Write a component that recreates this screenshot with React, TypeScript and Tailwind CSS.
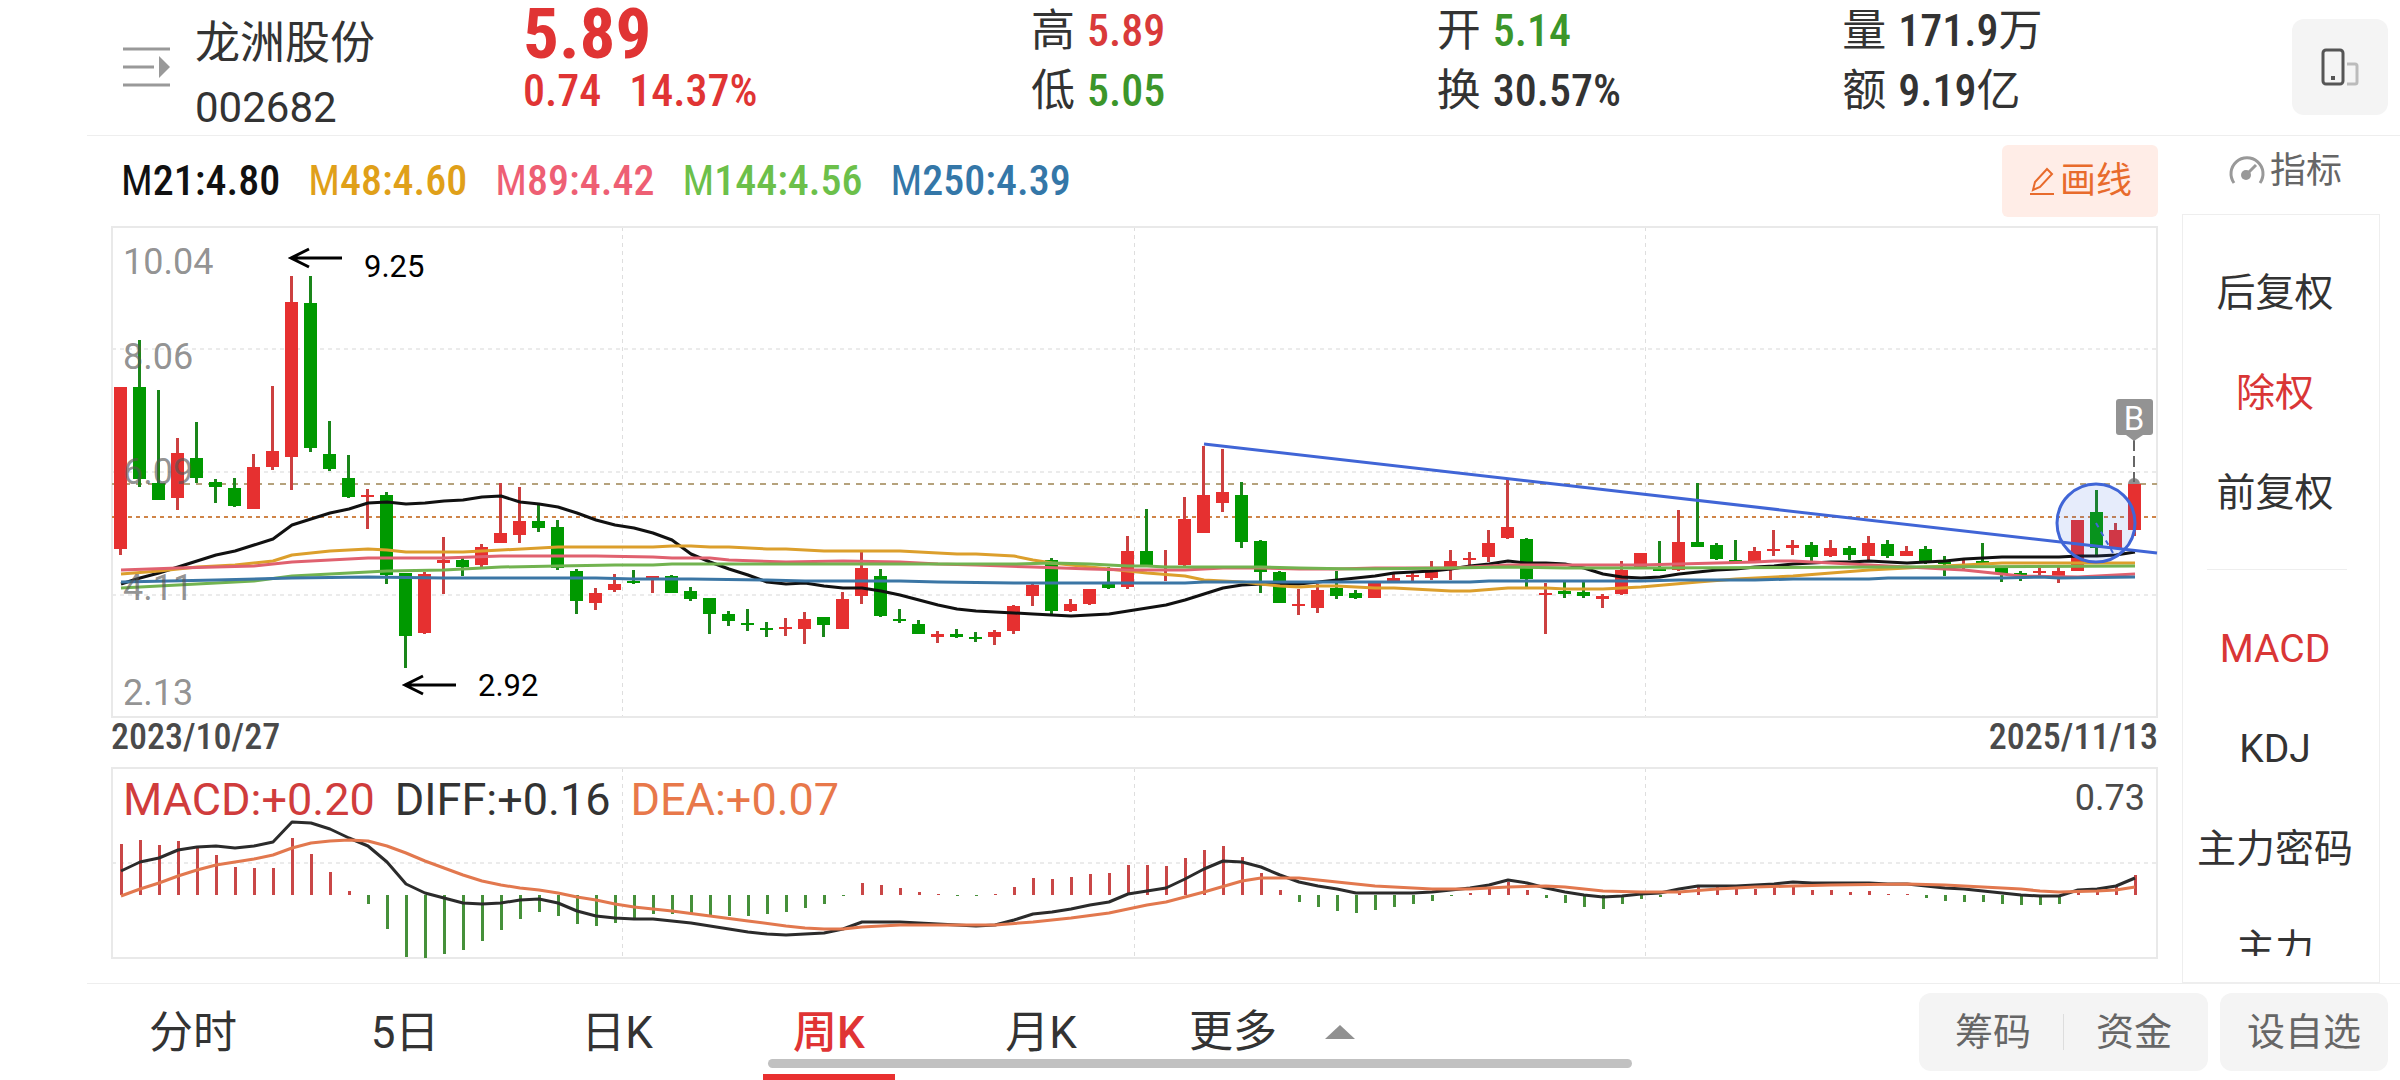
import React from "react";

/* ---------- chart data ---------- */

const FIRST_X = 120;
const STEP = 19;
const xAt = (i: number) => FIRST_X + i * STEP;

type Candle = [dir: "r" | "g", high: number, top: number, bottom: number, low: number];

const CANDLES: Candle[] = [
  ["r", 387, 387, 549, 555], ["g", 340, 387, 479, 487], ["g", 390, 483, 500, 500], ["r", 438, 453, 498, 510],
  ["g", 422, 458, 478, 483], ["g", 479, 482, 487, 503], ["g", 478, 488, 506, 507], ["r", 454, 467, 509, 509],
  ["r", 386, 451, 467, 470], ["r", 276, 302, 457, 490], ["g", 276, 303, 448, 452], ["g", 421, 454, 469, 471],
  ["g", 455, 478, 497, 498], ["r", 489, 495, 497, 529], ["g", 492, 495, 575, 584], ["g", 573, 573, 636, 668],
  ["r", 572, 574, 633, 634], ["r", 537, 560, 563, 594], ["g", 558, 560, 567, 576], ["r", 544, 547, 565, 568],
  ["r", 483, 533, 543, 543], ["r", 487, 521, 535, 543], ["g", 504, 521, 528, 532], ["g", 520, 527, 568, 570],
  ["g", 569, 571, 601, 614], ["r", 588, 593, 603, 610], ["r", 574, 584, 590, 592], ["g", 570, 581, 583, 584],
  ["r", 576, 576, 578, 593], ["g", 575, 576, 593, 593], ["g", 587, 591, 599, 601], ["g", 598, 598, 614, 634],
  ["g", 611, 614, 621, 626], ["g", 609, 623, 625, 631], ["g", 622, 628, 630, 637], ["r", 618, 627, 629, 636],
  ["r", 612, 619, 629, 644], ["g", 617, 617, 625, 637], ["r", 592, 599, 629, 629], ["r", 552, 568, 596, 604],
  ["g", 569, 576, 616, 617], ["g", 609, 619, 621, 623], ["g", 620, 624, 634, 634], ["r", 631, 634, 637, 643],
  ["g", 629, 634, 637, 638], ["g", 632, 637, 639, 642], ["r", 630, 632, 637, 645], ["r", 605, 606, 631, 634],
  ["r", 584, 585, 596, 606], ["g", 558, 560, 611, 614], ["r", 599, 604, 611, 612], ["r", 589, 589, 604, 605],
  ["g", 567, 583, 588, 589], ["r", 536, 551, 587, 589], ["g", 509, 551, 566, 566], ["r", 550, 566, 568, 581],
  ["r", 497, 519, 565, 567], ["r", 446, 495, 533, 533], ["r", 449, 492, 503, 512], ["g", 482, 495, 542, 548],
  ["g", 540, 541, 572, 593], ["g", 571, 572, 603, 603], ["r", 589, 604, 606, 615], ["r", 584, 590, 608, 613],
  ["g", 571, 588, 596, 599], ["g", 590, 593, 598, 599], ["r", 583, 583, 598, 598], ["r", 572, 578, 581, 581],
  ["r", 572, 575, 577, 581], ["r", 561, 572, 578, 580], ["r", 550, 561, 568, 580], ["r", 552, 558, 560, 565],
  ["r", 530, 543, 557, 562], ["r", 479, 527, 538, 539], ["g", 538, 539, 579, 587], ["r", 583, 593, 595, 634],
  ["g", 582, 591, 594, 598], ["g", 582, 592, 596, 598], ["r", 594, 596, 599, 608], ["r", 561, 570, 594, 595],
  ["r", 553, 553, 567, 567], ["g", 541, 569, 571, 571], ["r", 510, 542, 570, 571], ["g", 483, 542, 547, 547],
  ["g", 543, 545, 559, 560], ["g", 540, 560, 562, 562], ["r", 547, 551, 563, 563], ["r", 530, 549, 551, 556],
  ["r", 540, 545, 548, 555], ["g", 542, 545, 557, 562], ["r", 540, 548, 556, 557], ["g", 546, 548, 555, 560],
  ["r", 536, 543, 556, 560], ["g", 540, 544, 556, 558], ["r", 546, 551, 556, 556], ["g", 546, 549, 563, 564],
  ["g", 556, 562, 564, 576], ["r", 560, 564, 566, 569], ["g", 543, 561, 564, 564], ["g", 566, 567, 574, 582],
  ["g", 571, 573, 575, 581], ["r", 568, 571, 573, 576], ["r", 566, 571, 576, 583], ["r", 520, 520, 571, 571],
  ["g", 490, 512, 548, 555], ["r", 523, 530, 548, 548], ["r", 484, 484, 530, 536],
];

/* Moving averages as [candle index, y] pairs */
type Pair = [number, number];

const MA21: Pair[] = [
  584, 578, 573, 567, 561, 555, 551, 545, 539, 525, 519, 513, 509, 503, 502, 504, 503, 501, 500, 497, 496, 502, 504,
  507, 513, 520, 525, 528, 533, 540, 554, 562, 569, 575, 582, 584, 583, 586, 588, 588, 591, 595, 600, 605, 609, 611,
  612, 613, 614, 615, 616, 615, 614, 611, 608, 605, 600, 594, 588, 585, 584, 584, 584, 582, 580, 578, 576, 573, 572,
  571, 569, 566, 564, 561, 563, 563, 564, 568, 574, 577, 578, 577, 574, 572, 570, 569, 567, 566, 564, 563, 562, 562,
  561, 562, 563, 562, 561, 559, 558, 557, 557, 557, 557, 556, 556, 555, 552,
].map((y, i): Pair => [i, y]);

const MA48: Pair[] = [
  [0, 574], [2, 571], [4, 567], [6, 565], [8, 561], [9, 555], [11, 551], [13, 549], [14, 550], [15, 552], [18, 552],
  [20, 550], [23, 547], [28, 547], [29, 546], [30, 546], [31, 547], [32, 547], [34, 549], [35, 549], [37, 551],
  [41, 551], [44, 554], [45, 554], [47, 556], [48, 560], [49, 563], [51, 567], [53, 571], [54, 573], [56, 576],
  [57, 580], [59, 582], [61, 586], [62, 587], [63, 586], [64, 586], [66, 588], [67, 588], [70, 591], [71, 591],
  [73, 588], [75, 588], [76, 589], [78, 589], [80, 587], [83, 582], [85, 579], [88, 576], [90, 573], [92, 570],
  [94, 568], [97, 565], [99, 563], [106, 563],
];

const MA89: Pair[] = [
  [0, 570], [3, 568], [7, 566], [9, 562], [13, 558], [17, 558], [20, 556], [25, 556], [28, 557], [29, 558], [31, 558],
  [32, 560], [35, 562], [38, 561], [41, 562], [43, 564], [45, 565], [48, 567], [51, 569], [53, 570], [56, 570],
  [58, 568], [60, 568], [62, 569], [64, 569], [66, 568], [70, 568], [72, 566], [73, 565], [80, 565], [84, 563],
  [86, 562], [87, 561], [88, 561], [89, 562], [92, 565], [94, 567], [96, 569], [97, 570], [98, 572], [99, 574],
  [100, 576], [103, 577], [104, 576], [106, 574],
];

const MA144: Pair[] = [
  [0, 588], [3, 585], [7, 581], [9, 576], [14, 571], [17, 570], [20, 567], [23, 566], [26, 565], [28, 565], [29, 564],
  [47, 564], [49, 563], [51, 564], [53, 566], [54, 566], [55, 567], [60, 567], [62, 568], [65, 569], [70, 568],
  [73, 567], [76, 568], [80, 568], [93, 567], [106, 566],
];

const MA250: Pair[] = [
  [0, 582], [5, 580], [9, 578], [13, 577], [17, 578], [25, 578], [27, 579], [30, 579], [34, 580], [36, 581], [41, 581],
  [43, 582], [47, 583], [56, 583], [57, 582], [71, 582], [72, 581], [80, 581], [82, 580], [86, 580], [88, 579],
  [92, 579], [93, 578], [99, 578], [101, 577], [102, 578], [106, 577],
];

const MACD_ZERO = 895;
const MACD_BARS = [
  844, 840, 845, 841, 847, 855, 867, 868, 868, 838, 854, 872, 891, 904, 929, 957, 958, 954, 950, 941, 930, 919, 912,
  916, 924, 926, 923, 918, 914, 914, 914, 915, 916, 916, 914, 912, 908, 904, 896, 883, 885, 888, 892, 894, 896, 896,
  894, 887, 878, 879, 877, 874, 873, 865, 865, 866, 858, 850, 846, 857, 873, 890, 902, 907, 911, 913, 910, 907, 904,
  901, 896, 893, 889, 882, 890, 898, 903, 907, 909, 904, 899, 897, 893, 887, 887, 889, 889, 887, 887, 890, 890, 892,
  891, 894, 894, 898, 901, 902, 902, 904, 905, 905, 904, 892, 891, 887, 875,
];

const DIFF: Pair[] = [
  871, 862, 858, 850, 847, 846, 848, 846, 842, 822, 823, 829, 838, 846, 862, 884, 893, 898, 903, 904, 903, 900, 899,
  903, 911, 916, 918, 919, 919, 921, 923, 926, 929, 932, 934, 935, 934, 933, 929, 922, 922, 922, 923, 924, 925, 926,
  925, 920, 914, 912, 909, 905, 902, 894, 891, 888, 879, 869, 861, 862, 867, 875, 882, 886, 889, 893, 893, 893, 893,
  892, 890, 888, 885, 880, 883, 888, 892, 895, 897, 896, 894, 893, 889, 886, 886, 886, 885, 884, 882, 883, 883, 883,
  883, 884, 884, 886, 888, 889, 891, 893, 895, 896, 896, 890, 889, 886, 878,
].map((y, i): Pair => [i, y]);

const DEA: Pair[] = [
  [0, 896], [1, 889], [2, 883], [3, 876], [4, 870], [5, 865], [6, 862], [7, 859], [8, 855], [9, 848], [10, 843],
  [11, 841], [12, 840], [13, 841], [14, 846], [15, 853], [16, 861], [17, 868], [18, 875], [19, 881], [20, 885],
  [21, 888], [22, 890], [23, 893], [24, 897], [25, 900], [26, 904], [27, 907], [29, 911], [31, 916], [33, 921],
  [35, 926], [36, 928], [37, 929], [38, 929], [39, 927], [41, 925], [46, 925], [48, 922], [50, 918], [52, 913],
  [54, 905], [55, 902], [57, 892], [59, 881], [60, 878], [62, 878], [64, 882], [66, 886], [69, 889], [71, 889],
  [73, 887], [75, 886], [76, 887], [78, 891], [80, 892], [82, 892], [84, 889], [86, 887], [88, 886], [90, 885],
  [94, 884], [96, 885], [98, 887], [100, 889], [101, 891], [102, 892], [104, 891], [105, 890], [106, 887],
];

const GRID_X = [622, 1134, 1645];
const RED = "#e63030";
const GREEN = "#009900";

function Line({ pairs, color }: { pairs: Pair[]; color: string }) {
  return (
    <polyline
      points={pairs.map(([i, y]) => `${xAt(i) + 1},${y}`).join(" ")}
      fill="none"
      stroke={color}
      strokeWidth={3}
      strokeLinejoin="round"
    />
  );
}

function Arrow({ x, y, labelY, label }: { x: number; y: number; labelY: number; label: string }) {
  return (
    <g>
      <path d={`M${x + 52} ${y}H${x + 1}M${x + 19} ${y - 9}L${x + 1} ${y}L${x + 19} ${y + 9}`} fill="none" stroke="#000" strokeWidth={3} />
      <text x={x + 74} y={labelY} fontSize={31} fill="#000">{label}</text>
    </g>
  );
}

function PriceChart() {
  const labels: [string, number][] = [["10.04", 274], ["8.06", 369], ["6.09", 484], ["4.11", 600], ["2.13", 705]];
  return (
    <svg viewBox="111 226 2047 492" className="block h-auto w-full" role="img" aria-label="周K线图">
      <g stroke="#dedede" strokeWidth={1} strokeDasharray="4 4">
        {GRID_X.map((x) => <line key={x} x1={x + 0.5} x2={x + 0.5} y1={227} y2={717} />)}
      </g>
      <g stroke="#ebebeb" strokeWidth={2} strokeDasharray="4 4">
        {[349, 472, 595].map((y) => <line key={y} x1={112} x2={2157} y1={y} y2={y} />)}
      </g>
      <rect x={112} y={227} width={2045} height={490} fill="none" stroke="#e9e9e9" strokeWidth={2} />
      <line x1={112} x2={2157} y1={484} y2={484} stroke="#b5a27c" strokeWidth={2} strokeDasharray="6 6" />
      <line x1={112} x2={2157} y1={517} y2={517} stroke="#cf8448" strokeWidth={2} strokeDasharray="4 4" />
      {CANDLES.map(([dir, high, top, bottom, low], i) => (
        <g key={i} fill={dir === "r" ? RED : GREEN}>
          <rect x={xAt(i) - 1} y={high} width={3} height={low - high} fill={dir === "r" ? "#cc4040" : "#1a861a"} />
          <rect x={xAt(i) - 6} y={top} width={13} height={bottom - top} />
        </g>
      ))}
      <Line pairs={MA21} color="#111111" />
      <Line pairs={MA48} color="#dc9f2c" />
      <Line pairs={MA89} color="#e0616f" />
      <Line pairs={MA144} color="#72b350" />
      <Line pairs={MA250} color="#3b76a5" />
      <g fontSize={36} fill="#555" fillOpacity={0.65}>
        {labels.map(([t, y]) => <text key={t} x={123} y={y}>{t}</text>)}
      </g>
      <Arrow x={290} y={258} labelY={277} label="9.25" />
      <Arrow x={404} y={685} labelY={696} label="2.92" />
      <line x1={1204} y1={444} x2={2157} y2={553} stroke="#4065d6" strokeWidth={3} />
      <circle cx={2096} cy={523} r={39} fill="#4169e1" fillOpacity={0.13} stroke="#4065d6" strokeWidth={3} />
      <line x1={2096} y1={523} x2={2113} y2={553} stroke="#4065d6" strokeWidth={2} strokeDasharray="5 5" />
      <path d="M2128 484a6 6 0 0 1 12 0z" fill="#909090" />
      <line x1={2134} x2={2134} y1={440} y2={482} stroke="#666" strokeWidth={2} strokeDasharray="11 5" />
      <rect x={2116} y={399} width={37} height={36} rx={3} fill="#939393" />
      <path d="M2126 435h17l-9 6z" fill="#939393" />
      <text x={2134} y={430} fontSize={33} fill="#fff" textAnchor="middle">B</text>
    </svg>
  );
}

function MacdChart() {
  return (
    <svg viewBox="111 767 2047 192" className="block h-auto w-full" role="img" aria-label="MACD">
      <g stroke="#dedede" strokeWidth={1} strokeDasharray="4 4">
        {GRID_X.map((x) => <line key={x} x1={x + 0.5} x2={x + 0.5} y1={768} y2={958} />)}
      </g>
      <line x1={112} x2={2157} y1={863} y2={863} stroke="#ebebeb" strokeWidth={2} strokeDasharray="4 4" />
      <rect x={112} y={768} width={2045} height={190} fill="none" stroke="#e9e9e9" strokeWidth={2} />
      {MACD_BARS.map((y, i) => (
        <rect
          key={i}
          x={xAt(i)}
          y={Math.min(y, MACD_ZERO)}
          width={3}
          height={Math.abs(y - MACD_ZERO)}
          fill={y < MACD_ZERO ? "#c94747" : "#46903a"}
        />
      ))}
      <Line pairs={DIFF} color="#2b2b2b" />
      <Line pairs={DEA} color="#e2784e" />
      <text x={2145} y={810} fontSize={36} fill="#4a4a4a" textAnchor="end">0.73</text>
    </svg>
  );
}

/* ---------- header ---------- */

const LEGEND = [
  { n: "21:4.80", c: "text-[#111111]" },
  { n: "48:4.60", c: "text-[#e0a019]" },
  { n: "89:4.42", c: "text-[#ee5f74]" },
  { n: "144:4.56", c: "text-[#6cc04a]" },
  { n: "250:4.39", c: "text-[#3477a8]" },
];

const NARROW = "font-['Roboto_Condensed','Roboto','Noto_Sans_CJK_SC',sans-serif]";

function Quote({ label, value, unit, color = "text-[#333333]" }: { label: string; value: string; unit?: string; color?: string }) {
  return (
    <div className="flex items-center gap-3">
      <dt className="text-[44px] leading-[60px]">{label}</dt>
      <dd className={`flex items-center text-[44px] leading-[60px] ${color}`}>
        <span className={`font-medium ${NARROW}`}>{value}</span>
        {unit && <span>{unit}</span>}
      </dd>
    </div>
  );
}

function Header() {
  return (
    <header className="flex h-[136px] border-b border-[#eeeeee] pr-3 pl-9">
      <button aria-label="股票列表" className="mt-[46px] h-[42px] w-12 shrink-0">
        <svg viewBox="0 0 48 42" className="h-[42px] w-12">
          <path d="M0 3H47M0 21H31M0 39H47" stroke="#999" strokeWidth={3} />
          <path d="M36 10L47 21L36 32Z" fill="#999" />
        </svg>
      </button>
      <div className="ml-6 w-[328px] shrink-0 pt-[14px]">
        <h1 className="text-[45px] leading-[60px]">龙洲股份</h1>
        <p className="mt-1 text-[42px] leading-[60px]">002682</p>
      </div>
      <div className={`w-[508px] shrink text-[#e03434] ${NARROW}`}>
        <p className="text-[71px] leading-[67px] font-bold">5.89</p>
        <p className="mt-px flex gap-7 text-[44px] leading-[46px] font-medium"><span>0.74</span><span>14.37%</span></p>
      </div>
      <dl className="grid flex-1 grid-cols-3 pt-px">
        <div>
          <Quote label="高" value="5.89" color="text-[#d93a3a]" />
          <Quote label="低" value="5.05" color="text-[#3c962a]" />
        </div>
        <div>
          <Quote label="开" value="5.14" color="text-[#3c962a]" />
          <Quote label="换" value="30.57%" />
        </div>
        <div>
          <Quote label="量" value="171.9" unit="万" />
          <Quote label="额" value="9.19" unit="亿" />
        </div>
      </dl>
      <button aria-label="切换竖屏" className="mt-[19px] ml-11 flex h-24 w-24 shrink-0 items-center justify-center rounded-xl bg-[#f4f4f4]">
        <svg viewBox="0 0 38 38" className="h-[38px] w-[38px]" fill="none">
          <rect x="2" y="2" width="20" height="34" rx="3" stroke="#555" strokeWidth={3} />
          <rect x="10" y="28" width="4" height="4" fill="#555" />
          <path d="M26 16H34Q36 16 36 18V34Q36 36 34 36H26" stroke="#bbb" strokeWidth={3} />
        </svg>
      </button>
    </header>
  );
}

/* ---------- side panel ---------- */

function SideItem({ label, active }: { label: string; active?: boolean }) {
  return (
    <button className={`h-[100px] w-full shrink-0 whitespace-nowrap text-[39px] leading-[56px] ${active ? "text-[#d93636]" : ""}`}>
      {label}
    </button>
  );
}

function SidePanel() {
  return (
    <aside className="flex w-[242px] shrink-0 flex-col pr-5 pl-6">
      <button className="flex h-[78px] items-center justify-center gap-1 pb-2 pl-2 text-[36px] text-[#666666]">
        <svg viewBox="0 0 38 38" className="h-[38px] w-[38px]" fill="none">
          <path d="M6 31A16 16 0 1 1 32 31" stroke="#999" strokeWidth={3} />
          <path d="M19 22L28 13" stroke="#999" strokeWidth={3} />
          <circle cx="18" cy="23" r="5" fill="#999" />
        </svg>
        指标
      </button>
      <div className="flex min-h-0 grow basis-px flex-col border border-[#eeeeee] pr-3 pb-[26px]">
        <nav aria-label="指标列表" className="flex min-h-0 flex-1 flex-col overflow-hidden pt-7">
          <SideItem label="后复权" />
          <SideItem label="除权" active />
          <SideItem label="前复权" />
          <hr className="mr-5 ml-6 mt-[26px] mb-[29px] shrink-0 border-t border-[#eeeeee]" />
          <SideItem label="MACD" active />
          <SideItem label="KDJ" />
          <SideItem label="主力密码" />
          <SideItem label="主力" />
        </nav>
      </div>
    </aside>
  );
}

/* ---------- bottom bar ---------- */

const TABS = ["分时", "5日", "日K", "周K", "月K"];

function BottomBar() {
  return (
    <footer className="relative flex h-[97px] border-t border-[#eeeeee] pr-3">
      <nav aria-label="周期" className="flex text-[44px]">
        {TABS.map((t) => (
          <button
            key={t}
            className={`flex w-[212px] flex-col items-center ${t === "周K" ? "font-medium text-[#e03434]" : ""}`}
          >
            <span className="h-[90px] leading-[98px]">{t}</span>
            {t === "周K" && <span className="h-[6px] w-[132px] bg-[#e93030]" />}
          </button>
        ))}
        <button className="flex w-[250px] items-center justify-center gap-12">
          更多
          <svg viewBox="0 0 30 14" className="h-[14px] w-[30px]"><path d="M15 0L30 14H0Z" fill="#909090" /></svg>
        </button>
      </nav>
      <div className="mt-[9px] ml-auto flex h-[78px] gap-3 text-[38px] text-[#666666]">
        <div className="flex items-center rounded-xl bg-[#f4f4f4]">
          <button className="h-full w-36 pl-1">筹码</button>
          <span className="h-9 w-px bg-[#dddddd]" />
          <button className="h-full w-36 pr-1">资金</button>
        </div>
        <button className="w-[168px] rounded-xl bg-[#f4f4f4]">设自选</button>
      </div>
      <div className="absolute bottom-3 left-[681px] h-[9px] w-[864px] rounded-full bg-[#c1c1c1]" />
    </footer>
  );
}

export default function App() {
  return (
    <div className="flex min-h-screen flex-col overflow-hidden bg-white pl-[87px] font-['Roboto','Noto_Sans_CJK_SC',sans-serif] text-[#333333]">
      <Header />
      <main className="flex flex-1">
        <section className="flex min-w-0 flex-1 flex-col pl-6">
          <div className="flex h-[90px] items-center justify-between">
            <ul className={`flex gap-7 pl-[10px] text-[42px] leading-[60px] ${NARROW}`}>
              {LEGEND.map(({ n, c }) => (
                <li key={n} className={`flex ${c}`}>
                  <span>M</span>
                  <span className="font-medium">{n}</span>
                </li>
              ))}
            </ul>
            <button className="flex h-[72px] w-[156px] items-center justify-center gap-1 rounded-md bg-[#ffede7] text-[36px] text-[#e86b2c]">
              <svg viewBox="0 0 28 30" className="h-[30px] w-7" fill="none" stroke="currentColor" strokeWidth={2}>
                <path d="M5 24L7 16L19 3L24 8L12 21ZM2 28H26" />
              </svg>
              画线
            </button>
          </div>
          <PriceChart />
          <div className={`flex h-[49px] justify-between text-[36px] leading-[38px] font-medium text-[#4a4a4a] ${NARROW}`}>
            <time>2023/10/27</time>
            <time>2025/11/13</time>
          </div>
          <div className="relative mb-6">
            <MacdChart />
            <div className="absolute top-0 left-3 flex gap-5 text-[45px] leading-[66px]">
              <span className="text-[#d03c3c]">MACD:+0.20</span>
              <span>DIFF:+0.16</span>
              <span className="text-[#e8784a]">DEA:+0.07</span>
            </div>
          </div>
        </section>
        <SidePanel />
      </main>
      <BottomBar />
    </div>
  );
}
